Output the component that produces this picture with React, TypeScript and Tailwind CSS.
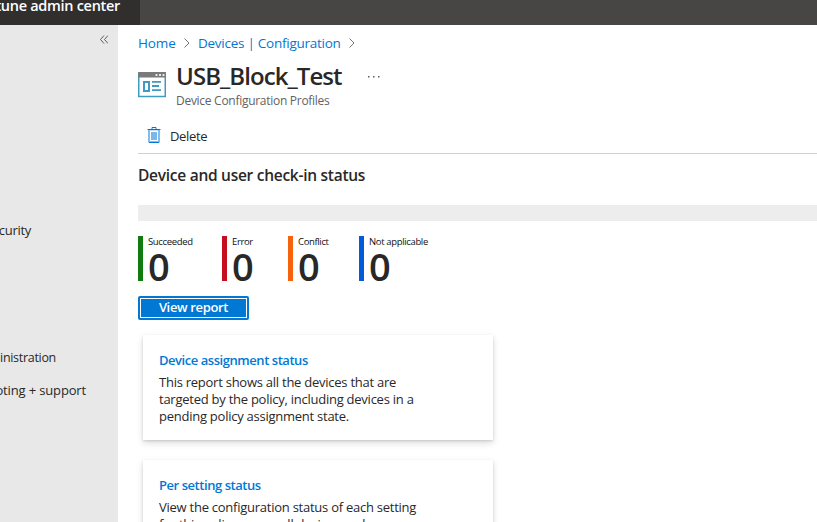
import React from "react";

const link = "text-[#0078d4]";

function Chevron() {
  return (
    <svg className="h-[10px] w-[6px]" viewBox="0 0 6 10" fill="none" stroke="#767472" strokeWidth="1">
      <path d="M0.5 0.5 5 5 0.5 9.5" />
    </svg>
  );
}

function ProfileIcon() {
  return (
    <svg className="h-[26px] w-7" viewBox="0 0 28 26">
      <rect x="0.75" y="1" width="26.5" height="23.5" fill="#fff" stroke="#3e9cc3" strokeWidth="1.5" />
      <path d="M0 1a1 1 0 0 1 1-1h26a1 1 0 0 1 1 1v4.5H0z" fill="#7a7a7a" />
      <path d="M17.5 2h2v2h-2zM21 2h2v2h-2zM24.5 2h2v2h-2z" fill="#e8e8e8" />
      <rect x="6" y="10" width="5" height="9" fill="none" stroke="#3e9cc3" strokeWidth="2" />
      <path d="M14 9.8h9M14 14h7M14 18.2h9" stroke="#3e9cc3" strokeWidth="1.8" />
    </svg>
  );
}

function TrashIcon() {
  return (
    <svg className="h-4 w-[14px]" viewBox="0 0 14 16">
      <path d="M1 3h12v12.5H1z" fill="#83bdec" />
      <path d="M3 3.5h8V14H3z" fill="#fff" />
      <path d="M4 5h6v8H4z" fill="#7ab8ec" />
      <path d="M0.5 2.5h13M5 2V0.5h4V2M2 15.5h10" stroke="#0078d4" fill="none" />
    </svg>
  );
}

const stats = [
  { label: "Succeeded", bar: "bg-[#107c10]", width: "w-[84px]" },
  { label: "Error", bar: "bg-[#c50f1f]", width: "w-[66px]" },
  { label: "Conflict", bar: "bg-[#f7630c]", width: "w-[71px]" },
  { label: "Not applicable", bar: "bg-[#015cda]", width: "w-[90px]" },
];

function Card({ title, lines }: { title: string; lines: string[] }) {
  return (
    <section className="h-[105px] w-[350px] shrink-0 bg-white px-4 pt-4 shadow-[0_3px_7px_rgba(0,0,0,0.14),0_1px_2px_rgba(0,0,0,0.12)]">
      <h3 className={`text-[13px] leading-[18px] font-semibold tracking-[-0.45px] ${link}`}>{title}</h3>
      <p className="mt-[5px] text-[13px] leading-[17px] tracking-[-0.25px] whitespace-nowrap">
        {lines.map((line) => (
          <span className="block" key={line}>{line}</span>
        ))}
      </p>
    </section>
  );
}

export default function App() {
  return (
    <div className="flex h-[522px] w-[817px] flex-col overflow-hidden bg-white font-['Open_Sans','Noto_Sans',sans-serif] text-[#292827]">
      <header className="flex h-[25px] shrink-0 bg-[#474644]">
        <div className="flex w-[140px] overflow-hidden bg-[#302f2e]">
          <div className="flex h-3 w-[120px] items-center justify-end text-[14.5px] leading-3 font-semibold tracking-[-0.3px] whitespace-nowrap text-white">tune admin center</div>
        </div>
      </header>
      <div className="flex min-h-0 flex-1">
        <nav className="flex w-[118px] shrink-0 flex-col overflow-hidden bg-[#e8e8e8] text-[13px] leading-5 whitespace-nowrap">
          <div className="flex h-[195px] shrink-0 justify-end pt-[10px] pr-[10px]">
            <svg className="h-[9px] w-2" viewBox="0 0 8 9" fill="none" stroke="#605e5c">
              <path d="M4 .5.5 4.5 4 8.5M8 .5 4.5 4.5 8 8.5" />
            </svg>
          </div>
          <div className="flex h-32 w-[31px] shrink-0 justify-end tracking-[-0.3px]">curity</div>
          <div className="flex h-8 w-[56px] shrink-0 justify-end text-[12.5px] tracking-[-0.3px]">inistration</div>
          <div className="flex w-[86px] shrink-0 justify-end tracking-[-0.15px]">oting + support</div>
        </nav>
        <main className="flex min-w-0 flex-1 flex-col pl-5">
          <div className={`mt-[9px] flex h-[18px] shrink-0 items-center text-[13.5px] whitespace-nowrap ${link}`}>
            <span className="w-[46px] tracking-[-0.1px]">Home</span>
            <Chevron />
            <span className="ml-2 w-[151px] tracking-[-0.26px]">Devices | Configuration</span>
            <Chevron />
          </div>
          <div className="mt-[10px] flex h-[50px] shrink-0">
            <div className="w-[38px] shrink-0 pt-[10px]"><ProfileIcon /></div>
            <div className="w-[192px] whitespace-nowrap">
              <h1 className="-mt-px text-2xl leading-[30px] font-semibold tracking-[-0.93px]">USB_Block_Test</h1>
              <p className="mt-[2px] text-xs leading-[16px] tracking-[-0.28px] text-[#646260]">Device Configuration Profiles</p>
            </div>
            <svg className="mt-[14px] h-[2px] w-3" viewBox="0 0 12 2" fill="#605e5c">
              <path d="M0 0h1.5v1.5H0zM5 0h1.5v1.5H5zM10 0h1.5v1.5H10z" />
            </svg>
          </div>
          <div className="flex h-[42px] shrink-0 items-center border-b border-[#d2d0ce] pt-1 pl-[9px] text-[13px]">
            <TrashIcon />
            <span className="mt-[5px] ml-[9px] tracking-[-0.35px]">Delete</span>
          </div>
          <h2 className="mt-[11px] h-5 shrink-0 text-[15.5px] leading-5 font-semibold tracking-[-0.27px]">Device and user check-in status</h2>
          <div className="mt-5 h-4 shrink-0 bg-[#ededed]" />
          <div className="mt-[15px] flex h-[45px] shrink-0">
            {stats.map((s) => (
              <div className={`flex ${s.width}`} key={s.label}>
                <div className={`w-[5px] ${s.bar}`} />
                <div className="pl-[5px] whitespace-nowrap">
                  <div className="h-[11px] text-[9.5px] leading-[11px] tracking-[-0.35px] text-[#111]">{s.label}</div>
                  <div className="text-[38px] leading-[38px] font-semibold">0</div>
                </div>
              </div>
            ))}
          </div>
          <button className="mt-[15px] h-6 w-[111px] shrink-0 rounded-[2px] border-2 border-[#0078d4] bg-[#0078d4] text-[13px] leading-[17px] font-semibold tracking-[-0.35px] text-white">
            <span className="flex h-full items-center justify-center border border-white pb-px">View report</span>
          </button>
          <div className="mt-[15px] ml-[5px] flex flex-col gap-5">
            <Card title="Device assignment status" lines={["This report shows all the devices that are", "targeted by the policy, including devices in a", "pending policy assignment state."]} />
            <Card title="Per setting status" lines={["View the configuration status of each setting", "for this policy across all devices and"]} />
          </div>
        </main>
      </div>
    </div>
  );
}
